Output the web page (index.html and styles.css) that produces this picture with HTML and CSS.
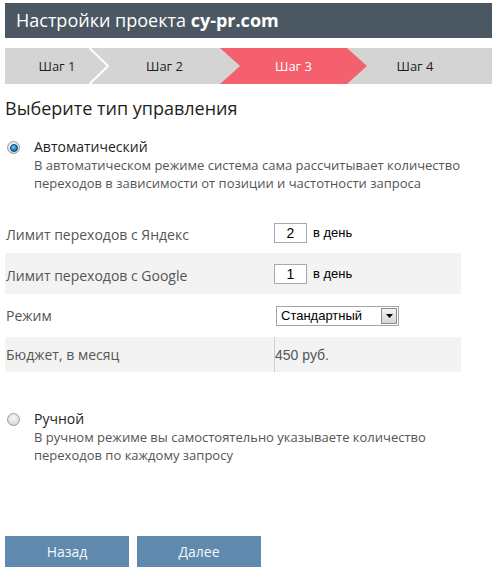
FILE: index.html
```html
<!DOCTYPE html>
<html lang="ru">
<head>
<meta charset="utf-8">
<title>Настройки проекта cy-pr.com</title>
<link rel="stylesheet" href="styles.css">
</head>
<body>
<div class="page">
  <div class="header">Настройки проекта <b>cy-pr.com</b></div>

  <div class="steps">
    <div class="step step-first">Шаг 1</div>
    <svg class="chevron" width="20" height="36" viewBox="0 0 20 36"><polyline points="0.5,0 19,18 0.5,36" fill="none" stroke="#ffffff" stroke-width="2"/></svg>
    <div class="step step-second">Шаг 2</div>
    <div class="step step-active">Шаг 3</div>
    <div class="step step-last">Шаг 4</div>
  </div>

  <h1 class="title">Выберите тип управления</h1>

  <div class="option option-auto">
    <span class="radio radio-checked"></span>
    <div class="option-body">
      <div class="option-name">Автоматический</div>
      <div class="option-desc">В автоматическом режиме система сама рассчитывает количество<br>переходов в зависимости от позиции и частотности запроса</div>
    </div>
  </div>

  <div class="settings">
    <div class="row row-h41">
      <div class="label">Лимит переходов с Яндекс</div>
      <div class="value"><span class="num">2</span><span class="unit">в день</span></div>
    </div>
    <div class="row row-h41 shaded">
      <div class="label">Лимит переходов с Google</div>
      <div class="value"><span class="num">1</span><span class="unit">в день</span></div>
    </div>
    <div class="row row-h43">
      <div class="label">Режим</div>
      <div class="value">
        <div class="select"><span class="select-text">Стандартный</span><span class="select-btn"><svg width="7" height="4" viewBox="0 0 7 4"><polygon points="0,0 7,0 3.5,4" fill="#000"/></svg></span></div>
      </div>
    </div>
    <div class="row row-h35 shaded">
      <div class="label">Бюджет, в месяц</div>
      <div class="value value-budget">450 руб.</div>
    </div>
  </div>

  <div class="option option-manual">
    <span class="radio"></span>
    <div class="option-body">
      <div class="option-name">Ручной</div>
      <div class="option-desc">В ручном режиме вы самостоятельно указываете количество<br>переходов по каждому запросу</div>
    </div>
  </div>

  <div class="buttons">
    <button class="btn">Назад</button>
    <button class="btn">Далее</button>
  </div>
</div>
</body>
</html>
```

FILE: styles.css
```css
html, body {
  margin: 0;
  padding: 0;
  background: #ffffff;
}

.page {
  padding: 3px 0 0 5px;
  font-family: "Open Sans", "Noto Sans", sans-serif;
}

.header {
  height: 35px;
  line-height: 35px;
  padding-left: 11px;
  background: #4b5763;
  color: #ffffff;
  font-size: 18px;
}

.header b {
  font-weight: 700;
}

.steps {
  margin-top: 10px;
  height: 36px;
  background: #d4d4d4;
  display: flex;
  font-size: 13px;
  color: #1e1e1e;
}

.step {
  height: 36px;
  line-height: 36px;
  text-align: center;
  box-sizing: border-box;
}

.chevron {
  flex: none;
  display: block;
}

.step-first {
  width: 84px;
  padding-left: 20px;
}

.step-second {
  width: 111px;
}

.step-active {
  width: 147px;
  padding-left: 20px;
  padding-right: 20px;
  background: #f4606d;
  color: #ffffff;
  clip-path: polygon(0 0, 127px 0, 147px 50%, 127px 100%, 0 100%, 20px 50%);
}

.step-last {
  flex: 1;
  margin-left: -20px;
  padding-left: 20px;
  padding-right: 29px;
}

.title {
  margin: 11px 0 0 0;
  font-size: 18px;
  line-height: 26px;
  font-weight: 400;
  color: #1e1e1e;
}

.option {
  display: flex;
}

.option-auto {
  margin-top: 16px;
}

.option-manual {
  margin-top: 37px;
}

.radio {
  flex: none;
  width: 11px;
  height: 11px;
  margin: 4px 14px 0 2px;
  border: 1px solid #9a9a9a;
  border-radius: 50%;
  background: radial-gradient(circle at 50% 35%, #f6f6f6 0%, #e2e2e2 55%, #c9c9c9 100%);
  display: flex;
  align-items: center;
  justify-content: center;
}

.radio-checked::after {
  content: "";
  width: 6px;
  height: 6px;
  border-radius: 50%;
  border: 1px solid #0d3f66;
  background: radial-gradient(circle at 40% 35%, #7fd0ff 0%, #2a8fd6 45%, #0b4f86 100%);
}

.option-name {
  font-size: 14px;
  line-height: 19px;
  color: #1e1e1e;
}

.option-desc {
  margin-top: 0;
  font-size: 13px;
  line-height: 18px;
  color: #555555;
}

.settings {
  margin-top: 20px;
  width: 456px;
}

.row {
  display: flex;
  align-items: center;
}

.row-h41 { height: 41px; }
.row-h43 { height: 43px; }
.row-h35 { height: 35px; }

.shaded {
  background: #f3f3f3;
}

.label {
  width: 269px;
  padding-left: 1px;
  box-sizing: border-box;
  font-size: 14px;
  line-height: 19px;
  color: #555555;
}

.row-h41 .label {
  padding-top: 3px;
}

.value {
  flex: 1;
  display: flex;
  align-items: center;
  font-family: "Liberation Sans", Arial, sans-serif;
}

.num {
  width: 33px;
  height: 20px;
  box-sizing: border-box;
  border: 1px solid #a9a9a9;
  background: #ffffff;
  text-align: center;
  font-size: 14px;
  line-height: 18px;
  color: #000000;
}

.unit {
  margin-left: 6px;
  font-size: 13px;
  color: #000000;
}

.select {
  margin-left: 2px;
  width: 123px;
  height: 20px;
  box-sizing: border-box;
  border: 1px solid #a5a5a5;
  background: #ffffff;
  display: flex;
  align-items: center;
  justify-content: space-between;
}

.select-text {
  padding-left: 4px;
  font-size: 13px;
  color: #000000;
}

.select-btn {
  width: 16px;
  height: 16px;
  margin-right: 1px;
  box-sizing: border-box;
  border: 1px solid #8c8c8c;
  background: linear-gradient(#f2f2f2, #d6d6d6);
  display: flex;
  align-items: center;
  justify-content: center;
}

.value-budget {
  align-self: stretch;
  border-left: 1px solid #cfcfcf;
  font-size: 14px;
  color: #555555;
}

.buttons {
  margin-top: 72px;
  display: flex;
  gap: 8px;
}

.btn {
  width: 124px;
  height: 31px;
  border: none;
  padding: 0;
  background: #5f8aad;
  color: #f4f8fc;
  font-family: "Open Sans", "Noto Sans", sans-serif;
  font-size: 14px;
}
```
